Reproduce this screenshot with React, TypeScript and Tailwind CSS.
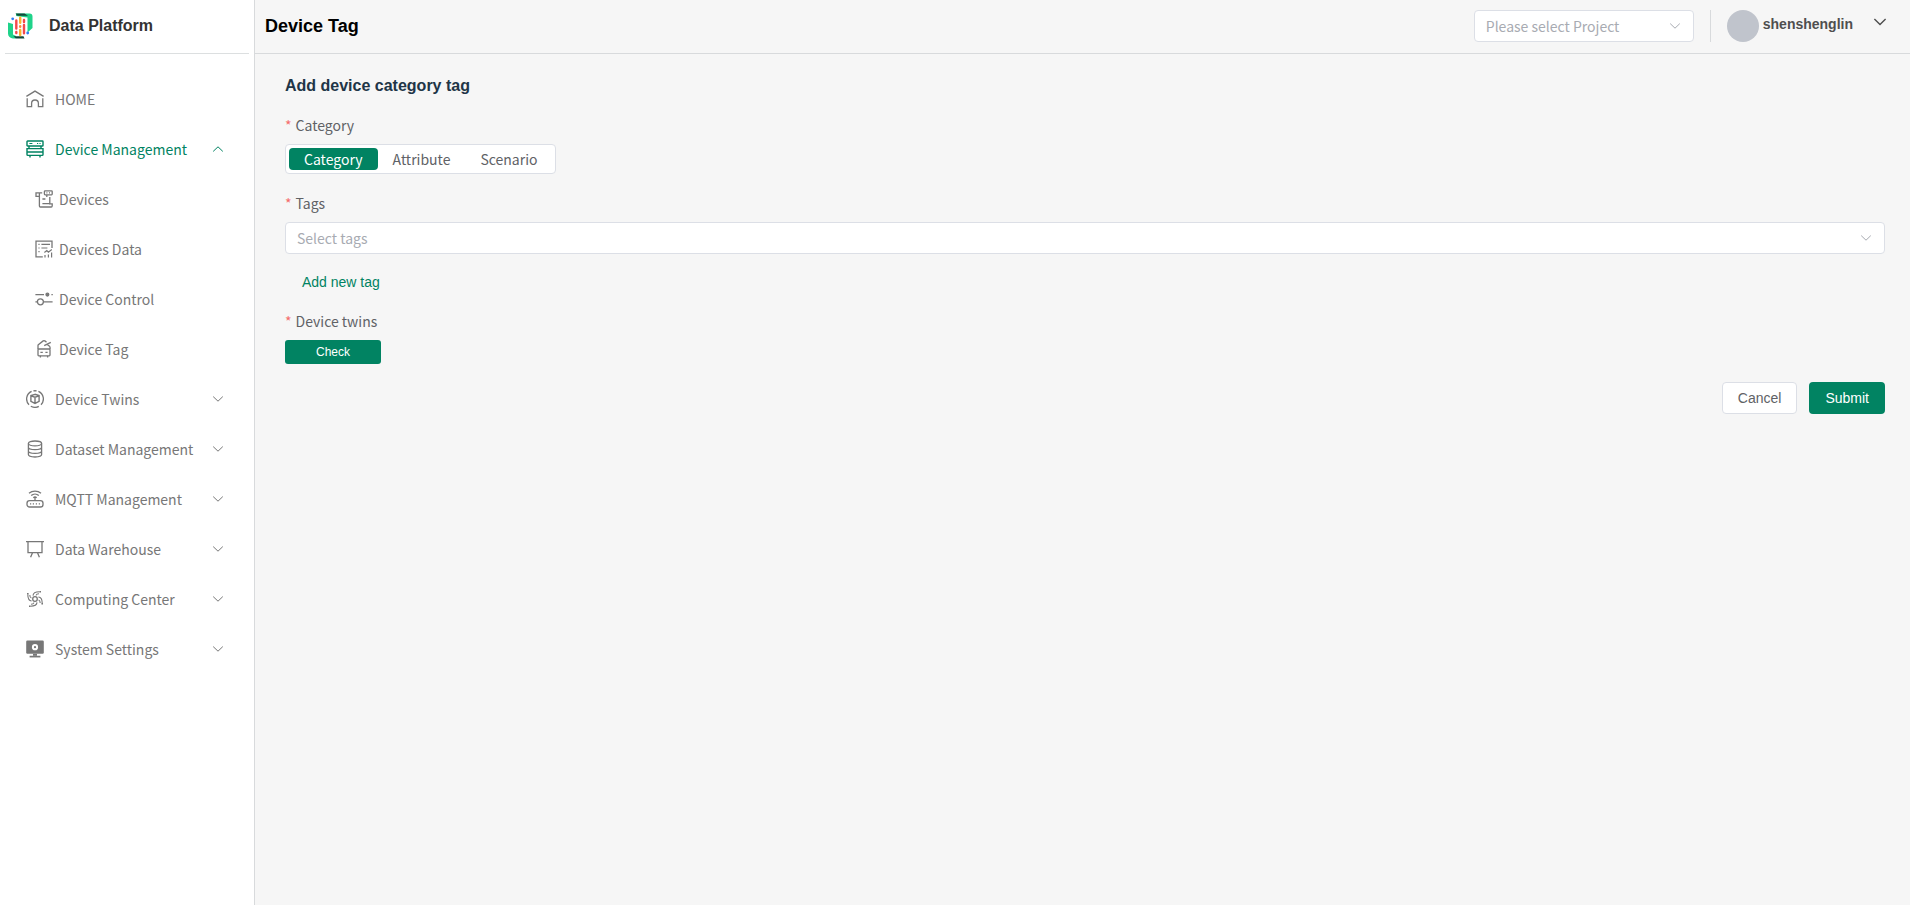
import { useState, type ReactNode } from "react";

const CJK = "font-['Noto_Sans_CJK_SC',sans-serif]";

function Icon({ children }: { children: ReactNode }) {
  return (
    <svg
      viewBox="0 0 18 18"
      className="size-[18px] shrink-0"
      fill="none"
      stroke="currentColor"
      strokeWidth="1.3"
      aria-hidden="true"
    >
      {children}
    </svg>
  );
}

function Chevron({ up = false, className = "" }: { up?: boolean; className?: string }) {
  return (
    <svg viewBox="0 0 12 12" className={`size-3 shrink-0 ${className}`} fill="none" stroke="currentColor" aria-hidden="true">
      <path d={up ? "M1.2 8.4 6 3.8l4.8 4.6" : "M1.2 3.6 6 8.2l4.8-4.6"} />
    </svg>
  );
}

const icons = {
  home: (
    <Icon>
      <path d="M.4 6.4 9 1.1l8.6 5.3M1.2 8.2v8.4h4.4v-3.2a3.4 3.4 0 0 1 6.8 0v3.2h4.4V8.2" />
    </Icon>
  ),
  server: (
    <Icon>
      <rect x="1" y="1" width="16" height="5" rx=".6" strokeWidth="1.4" />
      <path d="M3.4 3.5h3M11 3.500h1.200M13.400 3.500h1.200" strokeWidth="1" />
      <path d="M3 6v2.400M15 6v2.400M1 8.600h16v6a.8.8 0 0 1-.8.8H1.800a.8.8 0 0 1-.8-.8zM1 12h16M4 15.400v2.200M14 15.400v2.200" strokeWidth="1.400" />
    </Icon>
  ),
  devices: (
    <Icon>
      <path d="M4.400 6.400H1V2.800h6.200M4.400 2.800v13.200a1 1 0 0 0 1 1h10.800c.8 0 1-.5 1-1.200v-2H14.800V7" />
      <rect x="9.400" y=".8" width="7.800" height="4" rx=".7" />
      <path d="M11.400 2.800h1M14 2.800h1M7.400 9h3M7.400 13.600h7.400M11.800 5v2" />
    </Icon>
  ),
  data: (
    <Icon>
      <path d="M7.800 16.800H1V1.200h16V8" />
      <path d="M3.400 4.400h1.200M6.400 4.400H15M3.400 8h1.200M6.400 8h6M3.400 11.600h1.200" strokeWidth="1.200" />
      <path d="m9.400 12.400 2.400-1.800 1.600 1.600 3.400-2.600M10 15v2.400M13.400 14.600v2.800M16.600 12.400v5" strokeWidth="1.200" />
    </Icon>
  ),
  control: (
    <Icon>
      <path d="M.4 4.600h8.600M16.400 4.600h1.400M.4 11.800h2M8.600 11.800h9" />
      <circle cx="12.400" cy="4.600" r="1.400" fill="currentColor" />
      <circle cx="5.400" cy="11.800" r="3" />
    </Icon>
  ),
  tag: (
    <Icon>
      <path d="M3 9V5.600a1 1 0 0 1 .3-.8L8.200.9c.6-.4 1-.4 1.600 0l1.700 1.200M15 9V6.600M15.800 2.400 9.200 5.600M12 4.200l2.800 2.200" />
      <rect x="3" y="9" width="12" height="6.800" rx=".8" />
      <path d="M5.400 12.400h2.400M10.400 12.400h2.200M5.400 15.800v1.800M12.600 15.800v1.800" />
    </Icon>
  ),
  twins: (
    <Icon>
      <path d="M5.600 1.300A8.300 8.300 0 0 0 3 14.700M4.800 16.200a8.300 8.300 0 0 0 8 .2M15 14.700A8.300 8.300 0 0 0 12.400 1.300M10.600.900a8.300 8.300 0 0 0-3.200 0" />
      <path d="M9 4.300 4.900 5.600v5.800L9 13.400l4.100-2V5.600zM4.900 5.800 9 7.200l4.100-1.400M9 7.200v6" strokeWidth="1.400" />
    </Icon>
  ),
  dataset: (
    <Icon>
      <ellipse cx="9" cy="3.400" rx="6.600" ry="2.400" />
      <path d="M2.400 3.400v11.200c0 1.400 3 2.400 6.600 2.400s6.600-1 6.600-2.400V3.400M2.400 7.200c0 1.400 3 2.400 6.600 2.400s6.600-1 6.600-2.400M2.400 11c0 1.400 3 2.400 6.600 2.400s6.600-1 6.600-2.400" />
    </Icon>
  ),
  router: (
    <Icon>
      <path d="M3 3.300c3.400-3 8.600-3 12 0M5.200 5.600c2.200-2 5.400-2 7.600 0M7.300 7.700c1-.9 2.400-.9 3.400 0M9 7.600v2.600" />
      <rect x="1" y="10.600" width="16" height="6.400" rx="2.600" />
      <path d="M4 13.800h1.200M6.800 13.800H8M9.800 13.800H11M12.800 13.800H14" />
    </Icon>
  ),
  board: (
    <Icon>
      <path d="M0 1.700h18M2 1.700v11h14v-11M6.400 13l-1.800 4.200M11.600 13l1.800 4.200" />
    </Icon>
  ),
  compute: (
    <Icon>
      <circle cx="9" cy="9" r="2.300" />
      <path d="M7 5.600C7.200 3 9.600 1.800 13.400 1.800M10 5.400c.4-1.200 1.400-1.600 3-1.600M12.400 7c2.600.2 3.800 2.600 3.800 6M12.600 10c1.200.4 1.600 1.400 1.600 3M11 12.400c-.2 2.600-2.600 3.800-6.400 3.800M8 12.600c-.4 1.200-1.400 1.600-3 1.600M5.600 11C3 10.800 1.800 8.400 1.800 4.600M5.400 8C4.200 7.600 3.800 6.600 3.800 5" strokeWidth="1.100" />
      <path d="M13.400 1h1.600v1.600h-1.600zM15.400 13H17v1.600h-1.600zM3 15.400h1.600V17H3zM1 3h1.600v1.600H1z" fill="currentColor" stroke="none" />
    </Icon>
  ),
  system: (
    <Icon>
      <rect x=".2" y=".6" width="17.600" height="13.200" rx="1.200" fill="currentColor" stroke="none" />
      <path d="M3.600 16.600h10.800" strokeWidth="1.700" />
      <path d="M7 13.800h4v2H7z" fill="currentColor" stroke="none" />
      <circle cx="9" cy="7.200" r="2.100" stroke="#fff" strokeWidth="2" />
    </Icon>
  ),
};

type Item = { label: string; icon: ReactNode; expandable?: boolean; open?: boolean; children?: Item[] };

const menu: Item[] = [
  { label: "HOME", icon: icons.home },
  {
    label: "Device Management",
    icon: icons.server,
    expandable: true,
    open: true,
    children: [
      { label: "Devices", icon: icons.devices },
      { label: "Devices Data", icon: icons.data },
      { label: "Device Control", icon: icons.control },
      { label: "Device Tag", icon: icons.tag },
    ],
  },
  { label: "Device Twins", icon: icons.twins, expandable: true },
  { label: "Dataset Management", icon: icons.dataset, expandable: true },
  { label: "MQTT Management", icon: icons.router, expandable: true },
  { label: "Data Warehouse", icon: icons.board, expandable: true },
  { label: "Computing Center", icon: icons.compute, expandable: true },
  { label: "System Settings", icon: icons.system, expandable: true },
];

function Logo() {
  return (
    <svg viewBox="0 0 26 26" className="size-[26px] shrink-0" aria-hidden="true">
      <path d="M1 9.500 6 11v10.500l3 1.500v2.500H6a5 5 0 0 1-5-5z" fill="#1fd38a" />
      <path d="M9 .6h13.500a3 3 0 0 1 3 3V15l-5 4.500V4.500L9 3z" fill="#1fd38a" />
      <path d="M8.500.6h9l3.500 2.200H10.500zM6.500 23.200h10l1 2.200H9z" fill="#12493a" />
      <circle cx="5.700" cy="5.800" r="1.400" fill="#2f7cf6" />
      <circle cx="20.700" cy="20" r="1.400" fill="#2f7cf6" />
      <g strokeWidth="2.400" strokeLinecap="round">
        <path d="M9.300 7.500v8M17 7v2M17 12v8.200M9.300 19v1" stroke="#f4494b" />
        <path d="M13.200 4.800v5M13.200 17v5" stroke="#fbb42c" />
        <path d="M13.200 13.200v.6" stroke="#f98a3c" />
      </g>
    </svg>
  );
}

function Sidebar() {
  return (
    <aside className="flex w-[255px] shrink-0 flex-col border-r border-[#d8dadc] bg-white">
      <div className="mx-[5px] flex h-[54px] items-center gap-4 border-b border-[#dcdfe0] pb-0.5 pl-0.5">
        <Logo />
        <span className="text-base font-bold text-[#333]">Data Platform</span>
      </div>
      <nav aria-label="Main" className={`pt-5 text-sm text-[#777] ${CJK}`}>
        <ul>
          {menu.map((item) => (
            <li key={item.label}>
              {item.expandable ? (
                <button
                  type="button"
                  aria-expanded={!!item.open}
                  className={`flex h-[50px] w-full items-center gap-[11px] pl-[26px] pr-[30px] text-left ${item.open ? "text-[#018362]" : ""}`}
                >
                  {item.icon}
                  <span className="flex-1">{item.label}</span>
                  <Chevron up={item.open} />
                </button>
              ) : (
                <a href="#" className="flex h-[50px] items-center gap-[11px] pl-[26px]">
                  {item.icon}
                  {item.label}
                </a>
              )}
              {item.children && (
                <ul>
                  {item.children.map((child) => (
                    <li key={child.label}>
                      <a href="#" className="flex h-[50px] items-center gap-1.5 pl-[35px]">
                        {child.icon}
                        {child.label}
                      </a>
                    </li>
                  ))}
                </ul>
              )}
            </li>
          ))}
        </ul>
      </nav>
    </aside>
  );
}

function SelectBox({ id, placeholder, className }: { id: string; placeholder: string; className: string }) {
  return (
    <div className={`relative ${className}`}>
      <select
        id={id}
        aria-label={placeholder}
        className={`h-8 w-full appearance-none rounded border border-[#dcdfe6] bg-white px-[11px] text-sm text-[#a8abb2] ${CJK}`}
      >
        <option>{placeholder}</option>
      </select>
      <Chevron className="pointer-events-none absolute right-[13px] top-2.5 text-[#a8abb2]" />
    </div>
  );
}

function Header() {
  return (
    <header className="flex h-[54px] items-center border-b border-[#d8dadc] pb-0.5 pl-2.5 pr-[23px]">
      <h1 className="flex-1 text-lg font-bold text-black">Device Tag</h1>
      <SelectBox id="project" placeholder="Please select Project" className="w-[220px]" />
      <div className="ml-4 h-8 w-px bg-[#d8dadc]" />
      <button type="button" className="ml-4 flex items-center text-sm font-bold text-[#4f4f4f]">
        <span className="size-8 rounded-full bg-[#c0c4cc]" />
        <span className="ml-1 pb-1">shenshenglin</span>
        <svg viewBox="0 0 14 14" className="mb-2 ml-5 size-3.5" fill="none" stroke="currentColor" strokeWidth="1.4" aria-hidden="true">
          <path d="m1.400 4 5.600 5.600L12.600 4" />
        </svg>
      </button>
    </header>
  );
}

function Required() {
  return <span className="mr-1 text-[#f56c6c]">*</span>;
}

const LABEL = "flex h-[22px] items-center text-sm text-[#606266] font-['Noto_Sans_CJK_SC',sans-serif]";

export default function App() {
  const [kind, setKind] = useState("Category");
  return (
    <div className="flex min-h-screen bg-[#f6f6f6] font-['Liberation_Sans',Arial,sans-serif]">
      <Sidebar />
      <main className="min-w-0 flex-1">
        <Header />
        <form className="flex flex-col items-start pl-[30px] pr-[25px] pt-5" onSubmit={(e) => e.preventDefault()}>
          <h2 className="text-base leading-6 font-bold text-[#213547]">Add device category tag</h2>

          <fieldset className="mt-4">
            <legend className={LABEL}>
              <Required />
              Category
            </legend>
            <div className={`mt-2 flex h-[30px] items-center rounded border border-[#dcdfe6] bg-white px-[3px] text-sm text-[#606266] ${CJK}`}>
              {["Category", "Attribute", "Scenario"].map((name) => (
                <label
                  key={name}
                  className="flex h-[22px] cursor-pointer items-center rounded px-[15px] has-checked:bg-[#018362] has-checked:text-white"
                >
                  <input
                    type="radio"
                    name="kind"
                    className="sr-only"
                    checked={kind === name}
                    onChange={() => setKind(name)}
                  />
                  {name}
                </label>
              ))}
            </div>
          </fieldset>

          <label htmlFor="tags" className={`mt-[18px] ${LABEL}`}>
            <Required />
            Tags
          </label>
          <SelectBox id="tags" placeholder="Select tags" className="mt-2 w-full" />

          <button type="button" className="mt-3 h-8 px-[17px] text-sm text-[#018362]">
            Add new tag
          </button>

          <div className={`mt-3 ${LABEL}`}>
            <Required />
            Device twins
          </div>
          <button type="button" className="mt-2 h-6 w-24 rounded-[3px] bg-[#018362] text-xs text-white">
            Check
          </button>

          <div className="mt-[18px] flex gap-3 self-end text-sm">
            <button type="button" className="h-8 rounded border border-[#dcdfe6] bg-white px-[15px] text-[#606266]">
              Cancel
            </button>
            <button type="submit" className="h-8 rounded bg-[#018362] px-4 text-white">
              Submit
            </button>
          </div>
        </form>
      </main>
    </div>
  );
}
